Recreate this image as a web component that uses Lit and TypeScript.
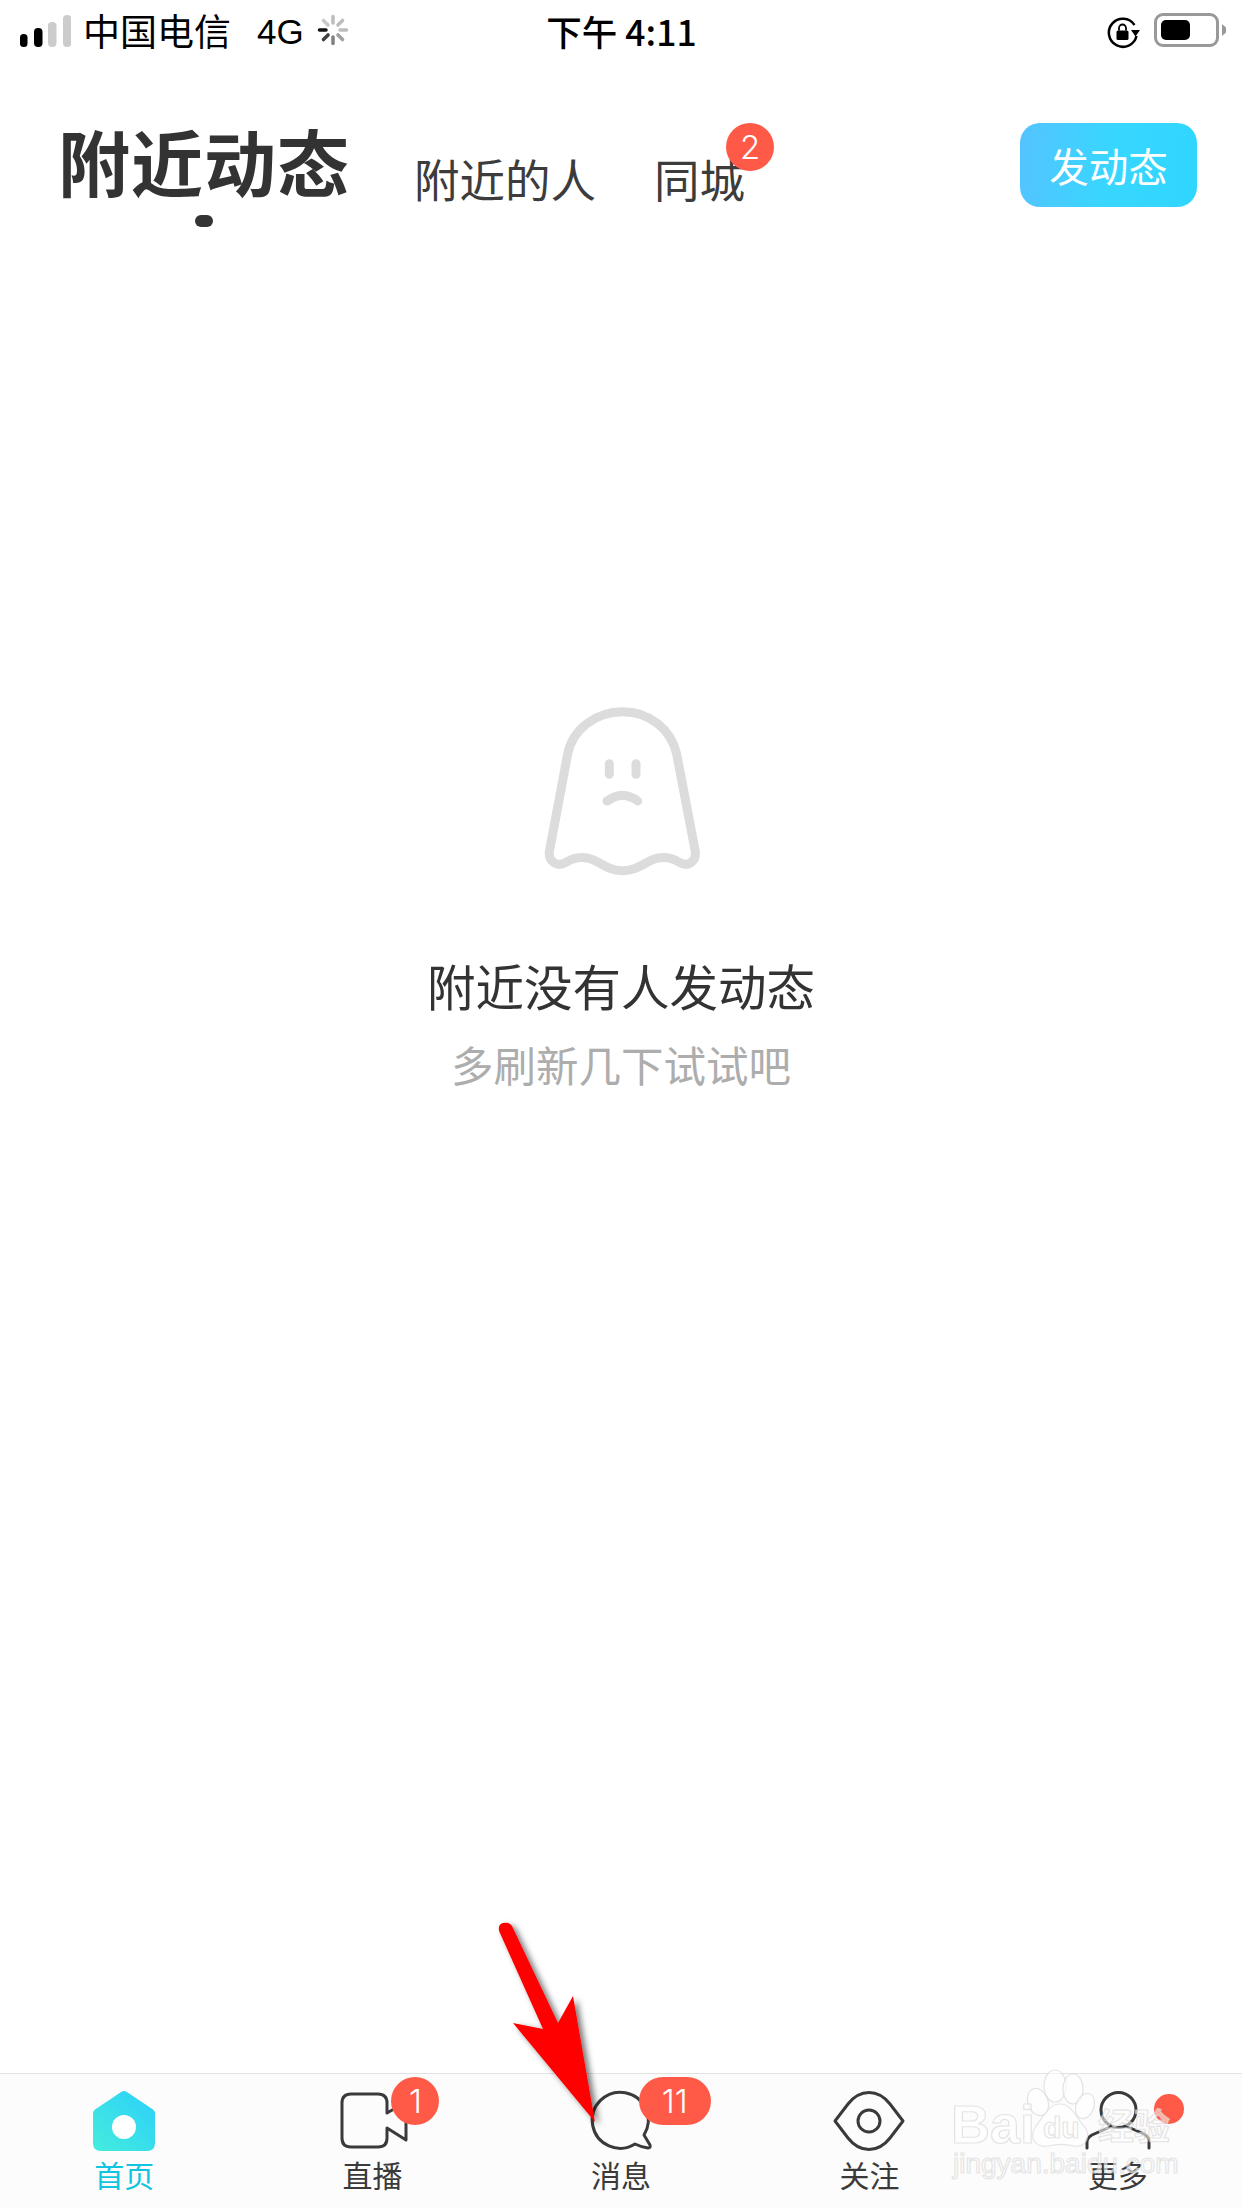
import { LitElement, html, css, svg } from "lit";
import { customElement } from "lit/decorators.js";

const homeIcon = html`<svg class="icon" viewBox="0 0 72 66">
  <defs><linearGradient id="homeGrad" x1="0" y1="1" x2="1" y2="0"><stop offset="0" stop-color="#45ecdc"/><stop offset="1" stop-color="#2bd0fa"/></linearGradient></defs>
  <path d="M33.5 3.8 Q36 2.2 38.5 3.8 L65 21.5 Q67 23 67 25 V55 Q67 63 59 63 H13 Q5 63 5 55 V25 Q5 23 7 21.5 Z" fill="url(#homeGrad)"/>
  <circle cx="36" cy="39" r="12" fill="#fff"/>
</svg>`;

const videoIcon = html`<svg class="icon" viewBox="0 0 72 66" fill="none" stroke="#3a3a3a" stroke-width="3" stroke-linejoin="round">
  <path d="M14 6 H41 Q50 6 50 15 V25 L69 14 V52 L50 40 V50 Q50 59 41 59 H14 Q5 59 5 50 V15 Q5 6 14 6 Z"/>
</svg>`;

const chatIcon = html`<svg class="icon" viewBox="0 0 72 66" fill="none" stroke="#3a3a3a" stroke-width="3" stroke-linejoin="round">
  <path d="M50 56 A28 28 0 1 1 59 47 L65 57 Q66 60 63 60 Q56 59 50 56 Z"/>
</svg>`;

const eyeIcon = html`<svg class="icon" viewBox="0 0 72 66" fill="none" stroke="#3a3a3a" stroke-width="3" stroke-linejoin="round">
  <path d="M2 33 L15 16 Q24 4.500 36 4.500 Q48 4.500 57 16 L70 33 L57 50 Q48 61.500 36 61.500 Q24 61.500 15 50 Z"/>
  <circle cx="36" cy="33" r="11"/>
</svg>`;

const personIcon = html`<svg class="icon" viewBox="0 0 72 66" fill="none" stroke="#3a3a3a" stroke-width="3" stroke-linecap="round">
  <circle cx="36.500" cy="22" r="17.500"/>
  <path d="M5 60 V54 Q5 50 10 47 L28 39"/>
  <path d="M46 39 L62 46 Q67 49 67 54 V60"/>
</svg>`;

const ghost = svg`<path d="M170 195 C185 120 255 68 335 68 C415 68 480 120 497 195 L553 488 C556 520 528 535 505 520 C480 505 455 500 425 512 C395 525 375 545 335 545 C295 545 275 525 245 512 C215 500 190 505 165 520 C142 535 112 520 115 488 Z"/>
  <path d="M295 224 V256 M375 224 V256"/>
  <path d="M288 336 Q335 302 380 336"/>`;

const spokes = [
  [0, "#bdbdbd"], [45, "#bdbdbd"], [90, "#bdbdbd"], [135, "#a0a0a0"],
  [180, "#808080"], [225, "#404040"], [270, "#111"], [315, "#c8c8c8"],
] as [number, string][];

@customElement("app-root")
export class AppRoot extends LitElement {
  static styles = css`
    :host {
      display: flex;
      flex-direction: column;
      position: relative;
      width: 1242px;
      height: 2208px;
      overflow: hidden;
      background: #fff;
      font-family: "Noto Sans CJK SC", "Noto Sans", sans-serif;
      color: #333;
    }
    .status {
      display: grid;
      grid-template-columns: 1fr auto 1fr;
      align-items: center;
      height: 60px;
      padding: 0 16px 0 20px;
      color: #000;
      font-size: 37px;
    }
    .status-left { display: flex; align-items: center; }
    .signal { display: block; width: 51px; height: 32px; margin-right: 12px; margin-top: 1px; }
    .net { margin-left: 26px; margin-top: 3px; font-family: "Liberation Sans", sans-serif; font-size: 35px; }
    .spin { width: 32px; height: 32px; margin-left: 13px; }
    .time { font-size: 35.5px; font-weight: 500; margin-left: -3px; }
    .status-right { display: flex; align-items: center; justify-content: flex-end; }
    .rot { width: 34px; height: 34px; margin-right: 14px; margin-top: 3px; }
    .battery {
      box-sizing: border-box;
      width: 65px;
      height: 34px;
      padding: 4px;
      border: 3px solid #999;
      border-radius: 9px;
    }
    .battery i { display: block; width: 29px; height: 100%; background: #000; border-radius: 5px; }
    .nub { width: 4px; height: 12px; margin-left: 3px; background: #999; clip-path: polygon(0 0, 100% 30%, 100% 70%, 0 100%); }

    .header {
      display: flex;
      align-items: flex-start;
      height: 170px;
      padding: 0 45px 0 58px;
    }
    .title { display: flex; flex-direction: column; align-items: center; padding-top: 55px; }
    .title b { font-size: 72px; font-weight: 700; line-height: 90px; letter-spacing: 1px; }
    .dot { width: 18px; height: 12px; margin-top: 10px; background: #333; border-radius: 6px; }
    .sub { position: relative; font-size: 45.5px; line-height: 60px; margin-top: 88px; color: #3c3c3c; }
    .sub.first { margin-left: 64px; }
    .sub.second { margin-left: 58px; }
    .count {
      position: absolute;
      display: flex;
      align-items: center;
      justify-content: center;
      background: #ff5a47;
      color: #fff;
      font-family: Inter, "Liberation Sans", sans-serif;
      font-weight: 300;
      border-radius: 24px;
      height: 48px;
      min-width: 48px;
      font-size: 33px;
    }
    .sub .count { left: 72px; top: -25px; }
    .post {
      margin-left: auto;
      margin-top: 63px;
      width: 177px;
      height: 84px;
      border-radius: 20px;
      background: linear-gradient(97deg, #55c3ff, #38d6ff 50%, #2fd6ff);
      color: #fff;
      font-size: 39.5px;
      line-height: 84px;
      text-align: center;
    }

    .empty {
      flex: 1;
      display: flex;
      flex-direction: column;
      align-items: center;
      padding-top: 459px;
    }
    .ghost { width: 220px; height: 200px; fill: none; stroke: #dcdcdc; stroke-width: 27; stroke-linecap: round; stroke-linejoin: round; }
    .empty h2 { margin: 62px 0 0; font-size: 48.5px; font-weight: 400; line-height: 68px; color: #333; }
    .empty p { margin: 15px 0 0; font-size: 42.5px; line-height: 60px; color: #adadad; }

    .tabs {
      display: grid;
      grid-template-columns: repeat(5, 1fr);
      height: 134px;
      border-top: 1.5px solid #e2e2e2;
      background: #fcfcfc;
    }
    .tab { position: relative; display: flex; flex-direction: column; align-items: center; padding-top: 14px; }
    .icon { display: block; width: 72px; height: 66px; }
    .tab span.label { font-size: 30px; line-height: 44px; margin-top: -2px; color: #3a3a3a; }
    .tab.on span.label { color: #12c4e0; }
    .tab .count { top: 3px; }
    .tab .one { left: 143px; }
    .tab .eleven { left: 142px; width: 72px; border-radius: 24px; }
    .tab .spot { left: 160px; top: 20px; height: 30px; min-width: 30px; }

    .arrow { position: absolute; left: 480px; top: 1910px; width: 130px; height: 225px; overflow: visible; }

    .mark { position: absolute; left: 945px; top: 2070px; width: 240px; height: 120px; overflow: visible; }
    .mark text, .mark ellipse, .mark path {
      fill: rgba(255,255,255,0.55);
      stroke: rgba(215,215,215,0.65);
      stroke-width: 1.200;
    }
    .mark .latin { font-family: "Liberation Sans", sans-serif; }
    .mark .han { font-family: "Noto Sans CJK SC", sans-serif; font-weight: 700; }
  `;

  render() {
    return html`
      <div class="status">
        <div class="status-left">
          <svg class="signal" viewBox="0 0 51 32">
            <rect x="0" y="19" width="7.500" height="13" rx="3.500" fill="#000"/>
            <rect x="14" y="13" width="8.500" height="19" rx="4" fill="#000"/>
            <rect x="28" y="7" width="8.500" height="25" rx="4" fill="#ccc"/>
            <rect x="43" y="0" width="8.500" height="32" rx="4" fill="#ccc"/>
          </svg>
          <span>中国电信</span>
          <span class="net">4G</span>
          <svg class="spin" viewBox="-16 -16 32 32" stroke-width="3.500" stroke-linecap="round">
            ${spokes.map(([a, c]) => svg`<line x1="0" y1="-7" x2="0" y2="-13.500" stroke=${c} transform="rotate(${a})"/>`)}
          </svg>
        </div>
        <div class="time">下午 4:11</div>
        <div class="status-right">
          <svg class="rot" viewBox="0 0 34 34">
            <path d="M28.500 10 A14 14 0 1 0 30.500 21" fill="none" stroke="#000" stroke-width="2.500"/>
            <path d="M25 15 H34 L29.500 21.500 Z" fill="#000"/>
            <rect x="10.500" y="15.500" width="12" height="9.500" rx="1.500" fill="#000"/>
            <path d="M13 15.500 V13 a3.500 3.500 0 0 1 7 0 V15.500" fill="none" stroke="#000" stroke-width="1.800"/>
          </svg>
          <div class="battery"><i></i></div>
          <div class="nub"></div>
        </div>
      </div>

      <div class="header">
        <div class="title"><b>附近动态</b><div class="dot"></div></div>
        <div class="sub first">附近的人</div>
        <div class="sub second">同城<span class="count">2</span></div>
        <div class="post">发动态</div>
      </div>

      <div class="empty">
        <svg class="ghost" viewBox="0 0 660 600">${ghost}</svg>
        <h2>附近没有人发动态</h2>
        <p>多刷新几下试试吧</p>
      </div>

      <div class="tabs">
        <div class="tab on">${homeIcon}<span class="label">首页</span></div>
        <div class="tab">${videoIcon}<span class="label">直播</span><span class="count one">1</span></div>
        <div class="tab">${chatIcon}<span class="label">消息</span><span class="count eleven">11</span></div>
        <div class="tab">${eyeIcon}<span class="label">关注</span></div>
        <div class="tab">${personIcon}<span class="label">更多</span><span class="count spot"></span></div>
      </div>

      <svg class="arrow" viewBox="480 1910 130 225">
        <defs><filter id="arrowShadow" x="-20%" y="-20%" width="150%" height="150%"><feDropShadow dx="4" dy="3" stdDeviation="3" flood-color="#000" flood-opacity="0.55"/></filter></defs>
        <path filter="url(#arrowShadow)" fill="#ff0000" d="M499.500 1932 Q497 1925 503 1923 Q509 1921.500 512 1926 L558 2023 L573 1996 L595 2122 L513 2023 L543 2029 Z"/>
      </svg>

      <svg class="mark" viewBox="945 2070 240 120">
        <ellipse cx="1055" cy="2086" rx="11" ry="16"/>
        <ellipse cx="1073" cy="2089" rx="10" ry="15"/>
        <ellipse cx="1038" cy="2102" rx="10" ry="14" transform="rotate(-20 1038 2102)"/>
        <ellipse cx="1085" cy="2106" rx="9" ry="13" transform="rotate(20 1085 2106)"/>
        <path d="M1060 2104 C1048 2104 1043 2118 1036 2126 C1028 2138 1036 2148 1048 2146 C1056 2144 1066 2144 1074 2146 C1086 2148 1092 2136 1084 2126 C1076 2118 1072 2104 1060 2104 Z"/>
        <text class="latin" x="951" y="2143" font-size="54" font-weight="700">Bai</text>
        <text class="latin" x="1043" y="2138" font-size="30" font-weight="700">du</text>
        <text class="han" x="1098" y="2140" font-size="36">经验</text>
        <text class="latin" x="953" y="2173" font-size="28">jingyan.baidu.com</text>
      </svg>
    `;
  }
}
